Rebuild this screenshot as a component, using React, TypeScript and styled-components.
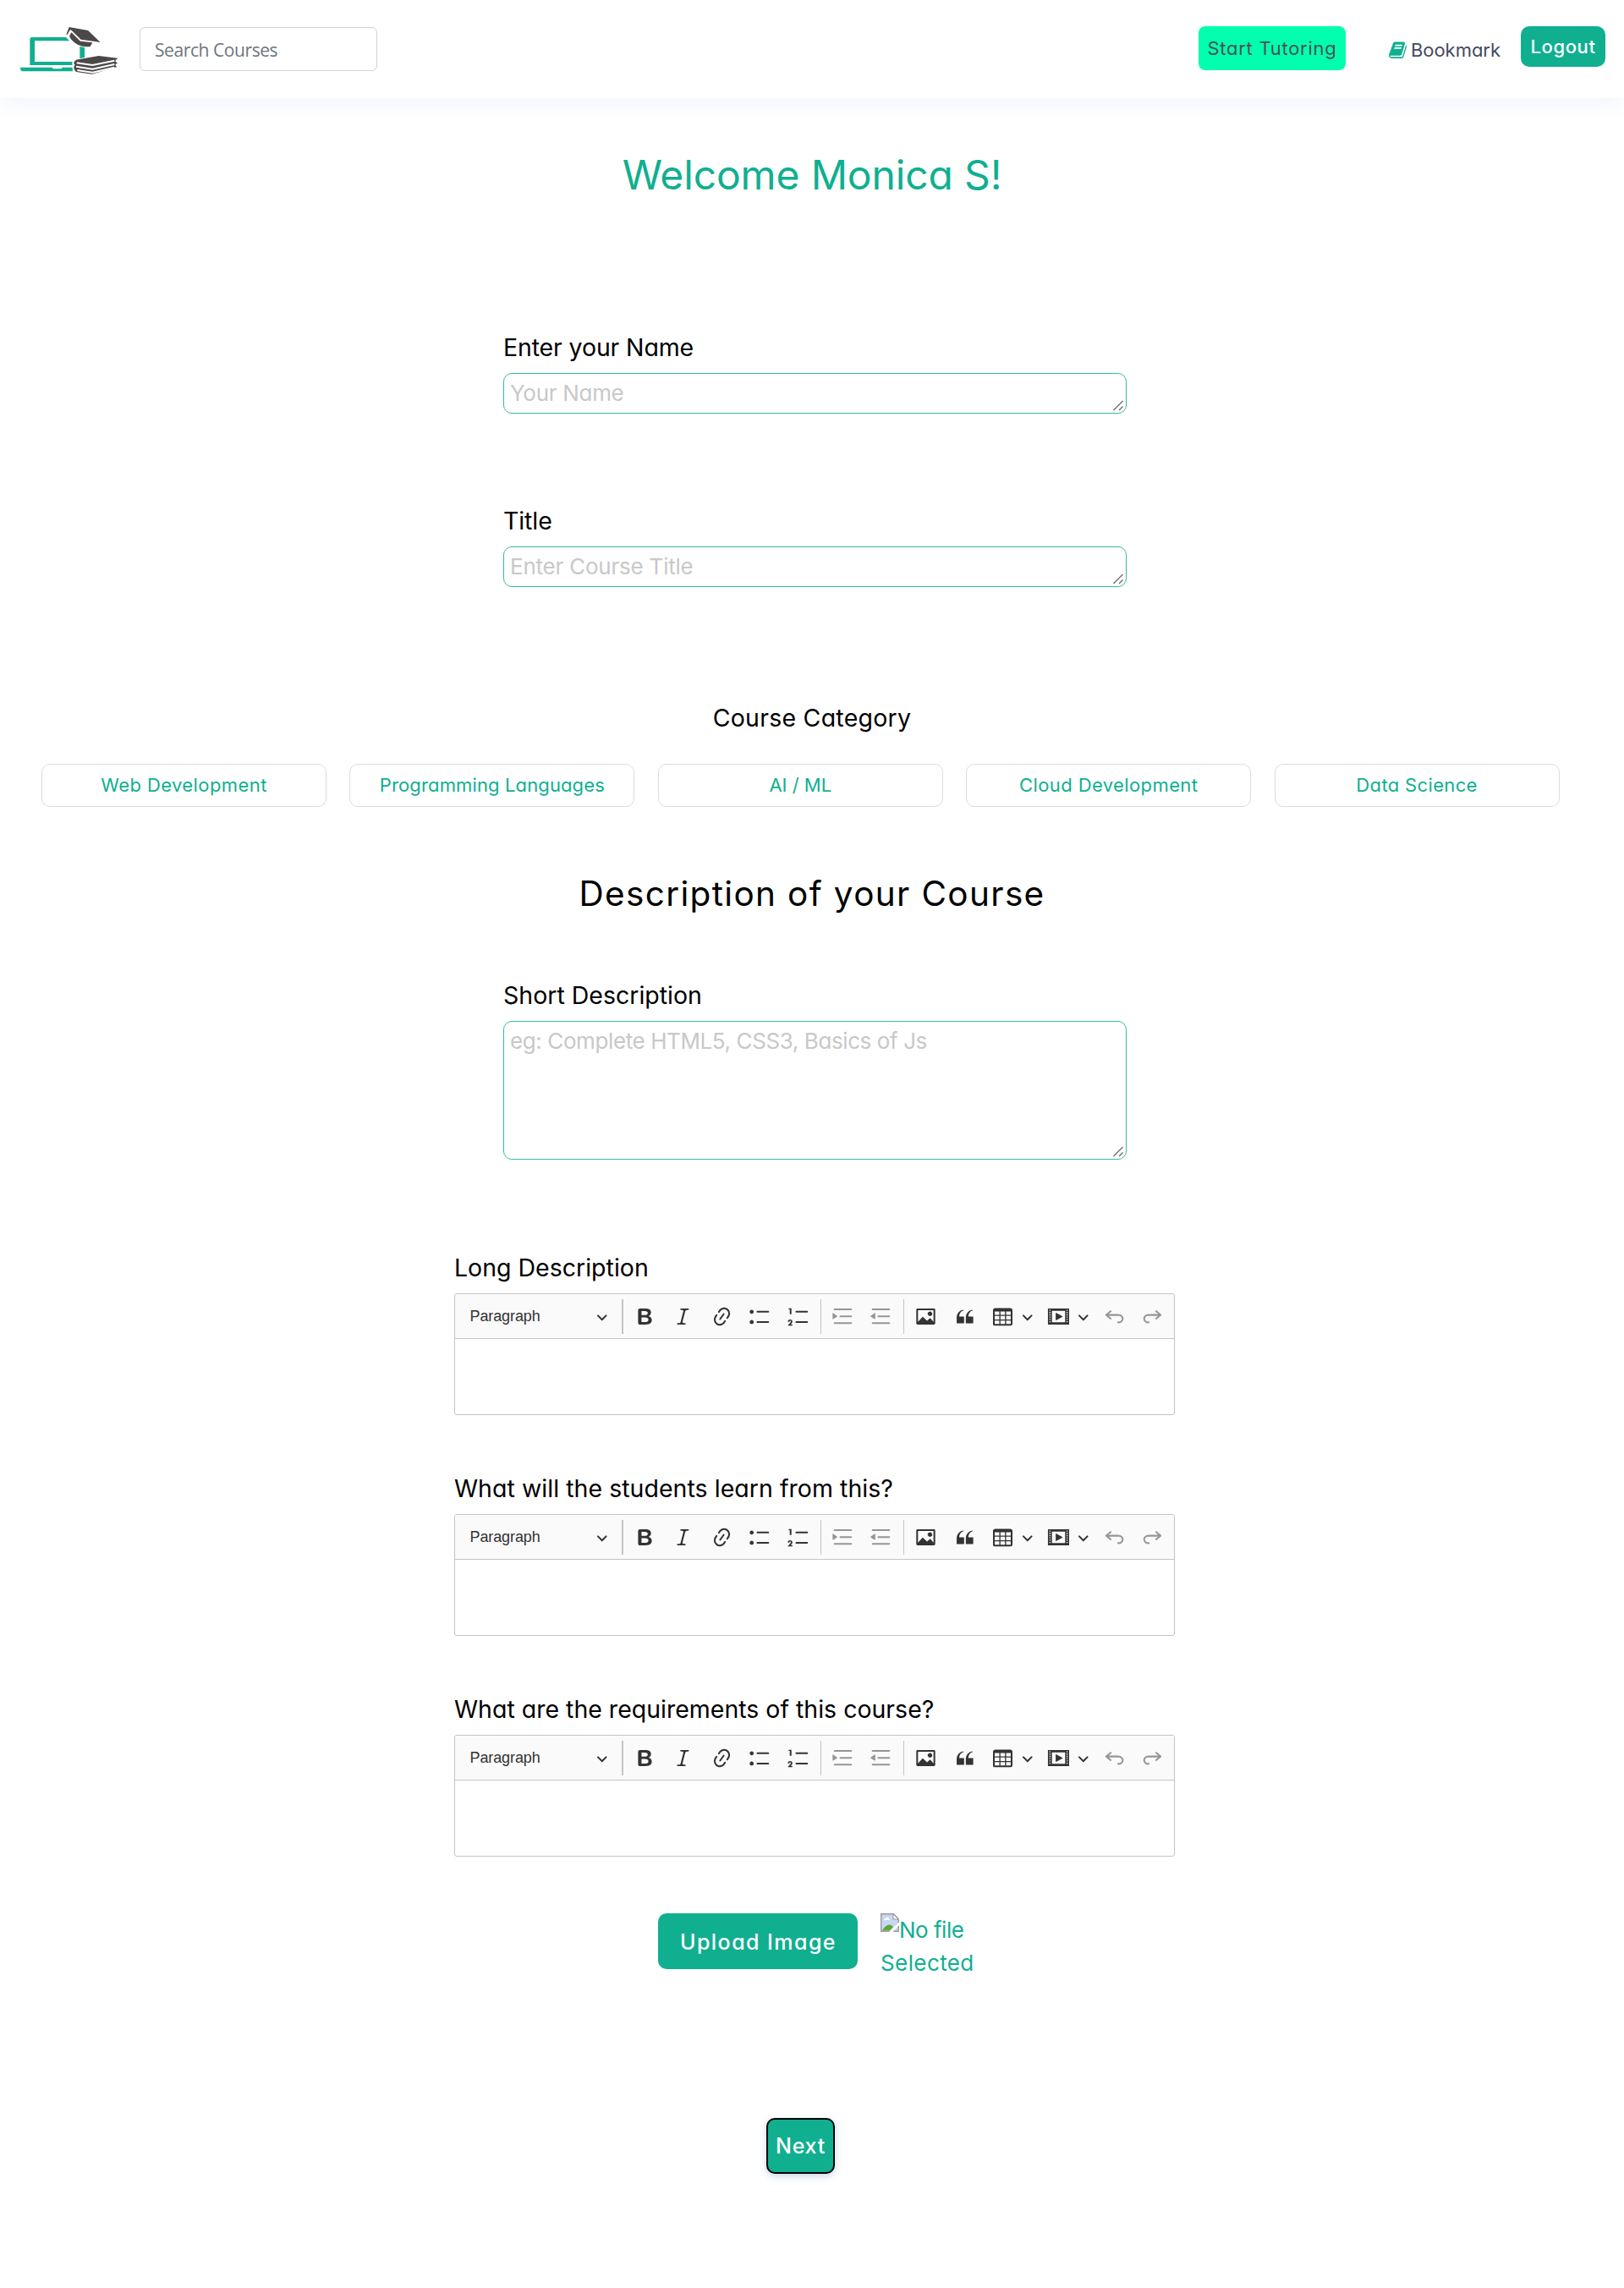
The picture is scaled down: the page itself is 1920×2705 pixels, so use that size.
import React from "react";
import styled, { createGlobalStyle } from "styled-components";

const GREEN = "#10af90";

const GlobalStyle = createGlobalStyle`
  *, *::before, *::after { box-sizing: border-box; }
  body {
    margin: 0;
    background: #fff;
    color: #000;
    font-family: Inter, "Liberation Sans", sans-serif;
    font-feature-settings: "cv11";
  }
  button, input, textarea { font: inherit; font-feature-settings: inherit; margin: 0; }
`;

const Page = styled.div`
  display: flex;
  flex-direction: column;
  min-height: 2705px;
`;

/* ---------- header ---------- */

const Header = styled.header`
  display: flex;
  align-items: flex-start;
  height: 116px;
  padding: 0 22px 0 16px;
  background: #fff;
  box-shadow: 0 13px 20px -4px rgba(65, 132, 234, 0.07);
`;

const LogoSvg = styled.svg`
  display: block;
  width: 130px;
  height: 70px;
  margin-top: 24px;
`;

const SearchInput = styled.input`
  width: 281px;
  height: 52px;
  margin: 32px auto 0 19px;
  padding: 1px 17px 0;
  border: 1px solid #ced4da;
  border-radius: 6px;
  background: #fff;
  color: #6c757d;
  font-family: "Open Sans", "Noto Sans", sans-serif;
  font-size: 21px;
  letter-spacing: -0.42px;
  &::placeholder { color: #6c757d; opacity: 1; }
`;

const TutoringButton = styled.button`
  width: 174px;
  height: 52px;
  margin: 31px 51px 0 0;
  padding: 0;
  border: 0;
  border-radius: 8px;
  background: #00ffae;
  color: #4f5150;
  font-size: 22px;
  letter-spacing: 0.72px;
`;

const BookmarkLink = styled.a`
  display: flex;
  align-items: center;
  gap: 5px;
  height: 40px;
  margin: 39px 24px 0 0;
  color: #444a63;
  font-size: 22px;
  letter-spacing: -0.03px;
  svg { display: block; width: 21px; height: 22.6px; fill: ${GREEN}; }
`;

const LogoutButton = styled.button`
  width: 100px;
  height: 48px;
  margin-top: 31px;
  padding: 0;
  border: 0;
  border-radius: 10px;
  background: ${GREEN};
  color: #fff;
  font-size: 22px;
  font-weight: 500;
  letter-spacing: 0.6px;
`;

/* ---------- form ---------- */

const Welcome = styled.h1`
  margin: 61px 0 0;
  line-height: 60px;
  font-size: 48px;
  font-weight: 400;
  letter-spacing: -0.15px;
  text-align: center;
  color: ${GREEN};
`;

const Field = styled.label<{ $top: number }>`
  display: flex;
  flex-direction: column;
  width: 737px;
  margin: ${(p) => p.$top}px 0 0 595px;
`;

const FieldLabel = styled.span<{ $spacing?: number }>`
  display: block;
  line-height: 40px;
  font-size: 28.5px;
  letter-spacing: ${(p) => p.$spacing ?? 0}px;
  white-space: nowrap;
`;

const TextAreaWrap = styled.span`
  position: relative;
  display: block;
  margin-top: 10px;
`;

const TextArea = styled.textarea<{ $height: number; $spacing: number }>`
  display: block;
  width: 737px;
  height: ${(p) => p.$height}px;
  padding: 3px 7px;
  border: 1px solid #35bc9f;
  border-radius: 10px;
  outline: 0;
  overflow: hidden;
  resize: none;
  background: #fff;
  line-height: 39px;
  font-size: 26px;
  letter-spacing: ${(p) => p.$spacing}px;
  &::placeholder { color: #c8c8c8; opacity: 1; }
`;

const Grip = styled.svg`
  position: absolute;
  right: 3px;
  bottom: 3px;
  width: 14px;
  height: 13px;
  fill: none;
  stroke: #757575;
  stroke-width: 1.5;
`;

const CategoryTitle = styled.h2`
  margin: 135px 0 0;
  line-height: 40px;
  font-size: 28.5px;
  font-weight: 400;
  letter-spacing: 0.25px;
  text-align: center;
`;

const Categories = styled.div`
  display: grid;
  grid-template-columns: repeat(5, 337px);
  column-gap: 27.4px;
  margin: 34px 0 0 49px;
`;

const Category = styled.button<{ $spacing: number }>`
  height: 51px;
  padding: 0 0 1px;
  border: 1px solid #dcdcdc;
  border-radius: 10px;
  background: #fff;
  color: ${GREEN};
  font-size: 22px;
  letter-spacing: ${(p) => p.$spacing}px;
`;

const SectionTitle = styled.h2`
  margin: 78px 0 0;
  line-height: 50px;
  font-size: 40.5px;
  font-weight: 400;
  letter-spacing: 1.35px;
  text-align: center;
`;

/* ---------- rich text editor ---------- */

const EditorBlock = styled.section<{ $top: number }>`
  width: 852px;
  margin: ${(p) => p.$top}px 0 0 537px;
`;

const EditorFrame = styled.div`
  height: 144px;
  margin-top: 10px;
  border: 1px solid #c4c4c4;
  border-radius: 3px;
  overflow: hidden;
`;

const Toolbar = styled.div`
  display: flex;
  align-items: center;
  height: 53px;
  border-bottom: 1px solid #c4c4c4;
  background: #fafafa;
  color: #333;
`;

const HeadingSelect = styled.div`
  display: flex;
  align-items: center;
  justify-content: space-between;
  width: 197px;
  padding: 0 16.5px 0 17.5px;
  font-family: "Liberation Sans", Arial, sans-serif;
  font-size: 18px;
  letter-spacing: -0.1px;
`;

const Divider = styled.span<{ $width: number; $margin: string }>`
  flex: none;
  width: ${(p) => p.$width}px;
  height: 41px;
  margin: ${(p) => p.$margin};
  background: #c4c4c4;
`;

const Tool = styled.span<{ $muted?: boolean }>`
  display: flex;
  flex: none;
  justify-content: center;
  width: ${(p) => (p.$muted ? 45.2 : 45.5)}px;
  opacity: ${(p) => (p.$muted ? 0.5 : 1)};
`;

const DropdownTool = styled.span`
  display: flex;
  flex: none;
  align-items: center;
  gap: 8.4px;
  width: 65.9px;
  padding-left: 9.4px;
`;

const ToolIcon = styled.svg`
  display: block;
  flex: none;
  width: 27px;
  height: 27px;
  fill: currentColor;
`;

const ArrowIcon = styled.svg`
  display: block;
  flex: none;
  width: 13.5px;
  height: 13.5px;
  margin-top: 1px;
  fill: currentColor;
`;

/* ---------- bottom actions ---------- */

const UploadRow = styled.div`
  display: flex;
  gap: 27px;
  margin: 67px 0 0 778px;
`;

const UploadButton = styled.button`
  width: 236px;
  height: 66px;
  padding: 1px 0 0 1px;
  border: 0;
  border-radius: 10px;
  background: ${GREEN};
  color: #fff;
  font-size: 25px;
  font-weight: 500;
  letter-spacing: 1.45px;
`;

const Preview = styled.div`
  width: 135px;
  line-height: 39px;
  font-size: 26px;
  color: ${GREEN};
`;

const PreviewLine = styled.div<{ $spacing: number }>`
  display: flex;
  align-items: flex-start;
  letter-spacing: ${(p) => p.$spacing}px;
  white-space: nowrap;
  svg { flex: none; width: 22px; height: 22px; }
`;

const NextButton = styled.button`
  width: 81px;
  height: 66px;
  margin: 164px 0 0 906px;
  padding: 0;
  border: 2px solid #000;
  border-radius: 10px;
  background: ${GREEN};
  box-shadow: 0 3px 8px rgba(60, 90, 160, 0.25);
  color: #fff;
  font-size: 25px;
  font-weight: 500;
  letter-spacing: 0.8px;
`;

const ICONS = {
  bold: "M10.187 17H5.773c-.637 0-1.092-.138-1.364-.415-.273-.277-.409-.718-.409-1.323V4.738c0-.617.14-1.062.419-1.332.279-.27.73-.406 1.354-.406h4.68c.69 0 1.288.041 1.793.124.506.083.96.242 1.36.477.341.197.644.447.906.75a3.262 3.262 0 0 1 .808 2.162c0 1.401-.722 2.426-2.167 3.075C15.05 10.175 16 11.315 16 13.01a3.756 3.756 0 0 1-2.296 3.504 6.1 6.1 0 0 1-1.517.377c-.571.073-1.238.11-2 .11zm-.217-6.217H7v4.087h3.069c1.977 0 2.965-.69 2.965-2.072 0-.707-.256-1.22-.768-1.537-.512-.319-1.277-.478-2.296-.478zM7 5.13v3.619h2.606c.729 0 1.292-.067 1.69-.2a1.6 1.6 0 0 0 .91-.765c.165-.267.247-.566.247-.897 0-.707-.26-1.176-.778-1.409-.519-.232-1.31-.348-2.375-.348H7z",
  italic: "m9.586 14.633.021.004c-.036.335.095.655.393.962.082.083.173.15.274.201h1.474a.6.6 0 1 1 0 1.2H5.304a.6.6 0 0 1 0-1.2h1.15c.474-.07.809-.182 1.005-.334.157-.122.291-.32.404-.597l2.416-9.55a1.053 1.053 0 0 0-.281-.823 1.12 1.12 0 0 0-.442-.296H8.15a.6.6 0 0 1 0-1.2h6.443a.6.6 0 1 1 0 1.2h-1.195c-.376.056-.65.155-.823.296-.215.175-.423.439-.623.79l-2.366 9.347z",
  link: "m11.077 15 .991-1.416a.75.75 0 1 1 1.229.86l-1.148 1.64a.748.748 0 0 1-.217.206 5.251 5.251 0 0 1-8.503-5.955.741.741 0 0 1 .12-.274l1.147-1.639a.75.75 0 1 1 1.228.86L4.933 10.7l.006.003a3.75 3.75 0 0 0 6.132 4.294l.006.004zm5.494-5.335a.748.748 0 0 1-.12.274l-1.147 1.639a.75.75 0 1 1-1.228-.86l.86-1.23a3.75 3.75 0 0 0-6.144-4.301l-.86 1.229a.75.75 0 0 1-1.229-.86l1.148-1.64a.748.748 0 0 1 .217-.206 5.251 5.251 0 0 1 8.503 5.955zm-4.563-2.532a.75.75 0 0 1 .184 1.045l-3.155 4.505a.75.75 0 1 1-1.229-.86l3.155-4.506a.75.75 0 0 1 1.045-.184z",
  bulleted: "M7 5.75c0 .414.336.75.75.75h9.5a.75.75 0 1 0 0-1.5h-9.5a.75.75 0 0 0-.75.75zm-6 0C1 4.784 1.777 4 2.75 4c.966 0 1.75.777 1.75 1.75 0 .966-.777 1.75-1.75 1.75C1.784 7.5 1 6.723 1 5.75zm6 9c0 .414.336.75.75.75h9.5a.75.75 0 1 0 0-1.5h-9.5a.75.75 0 0 0-.75.75zm-6 0c0-.966.777-1.75 1.75-1.75.966 0 1.75.777 1.75 1.75 0 .966-.777 1.75-1.75 1.75-.966 0-1.75-.777-1.75-1.75z",
  numbered: "M7 5.75c0 .414.336.75.75.75h9.5a.75.75 0 1 0 0-1.5h-9.5a.75.75 0 0 0-.75.75zM3.5 3v5H2V3.7H1v-1h2.5V3zM.343 17.857l2.59-3.257H2.92a.6.6 0 1 0-1.04 0H.302a2 2 0 1 1 3.995 0h-.001c-.048.405-.16.734-.333.988-.175.254-.59.692-1.244 1.312H4.3v1h-4l.043-.043zM7 14.75a.75.75 0 0 1 .75-.75h9.5a.75.75 0 1 1 0 1.5h-9.5a.75.75 0 0 1-.75-.75z",
  indent: "M2 3.75c0 .414.336.75.75.75h14.5a.75.75 0 1 0 0-1.5H2.75a.75.75 0 0 0-.75.75zm5 6c0 .414.336.75.75.75h9.5a.75.75 0 1 0 0-1.5h-9.5a.75.75 0 0 0-.75.75zM2.75 16.5h14.5a.75.75 0 1 0 0-1.5H2.75a.75.75 0 1 0 0 1.5zM1.632 6.95 5.02 9.358a.4.4 0 0 1-.013.661l-3.39 2.207A.4.4 0 0 1 1 11.892V7.275a.4.4 0 0 1 .632-.326z",
  outdent: "M2 3.75c0 .414.336.75.75.75h14.5a.75.75 0 1 0 0-1.5H2.75a.75.75 0 0 0-.75.75zm5 6c0 .414.336.75.75.75h9.5a.75.75 0 1 0 0-1.5h-9.5a.75.75 0 0 0-.75.75zM2.75 16.5h14.5a.75.75 0 1 0 0-1.5H2.75a.75.75 0 1 0 0 1.5zm1.618-9.55L.98 9.358a.4.4 0 0 0 .013.661l3.39 2.207A.4.4 0 0 0 5 11.892V7.275a.4.4 0 0 0-.632-.326z",
  image: "M6.91 10.54c.26-.23.64-.21.88.03l3.36 3.14 2.23-2.06a.64.64 0 0 1 .87 0l2.52 2.97V4.5H3.2v10.12l3.71-4.08zm10.27-7.51c.6 0 1.09.47 1.09 1.05v11.84c0 .59-.49 1.06-1.09 1.06H2.79c-.6 0-1.09-.47-1.09-1.06V4.08c0-.58.49-1.05 1.1-1.05h14.38zm-5.22 5.56a1.96 1.96 0 1 1 3.4-1.96 1.96 1.96 0 0 1-3.4 1.96z",
  quote: "M3 10.423a6.5 6.5 0 0 1 6.056-6.408l.038.67C6.448 5.423 5.354 7.663 5.22 10H9c.552 0 .5.432.5.986v4.511c0 .554-.448.503-1 .503h-5c-.552 0-.5-.449-.5-1.003v-4.574zm8 0a6.5 6.5 0 0 1 6.056-6.408l.038.67c-2.646.739-3.74 2.979-3.873 5.315H17c.552 0 .5.432.5.986v4.511c0 .554-.448.503-1 .503h-5c-.552 0-.5-.449-.5-1.003v-4.574z",
  table: "M3 5.5v3h4v-3H3zm0 4v3h4v-3H3zm0 4v3h4v-3H3zm5 3h4v-3H8v3zm5 0h4v-3h-4v3zm4-4v-3h-4v3h4zm0-4v-3h-4v3h4zm1.5 8a1.5 1.5 0 0 1-1.5 1.5H3A1.5 1.5 0 0 1 1.5 17V4c.222-.863 1.068-1.5 2-1.5h13c.932 0 1.778.637 2 1.5v12.5zM12 12.5v-3H8v3h4zm0-4v-3H8v3h4z",
  media: "M18.68 3.03c.6 0 .59-.03.59.55v12.84c0 .59.01.56-.59.56H1.29c-.6 0-.59.03-.59-.56V3.58c0-.58-.01-.55.6-.55h17.38zM15.77 15V5H4.2v10h11.57zM2 4v1h1V4H2zm0 2v1h1V6H2zm0 2v1h1V8H2zm0 2v1h1v-1H2zm0 2v1h1v-1H2zm0 2v1h1v-1H2zM17 4v1h1V4h-1zm0 2v1h1V6h-1zm0 2v1h1V8h-1zm0 2v1h1v-1h-1zm0 2v1h1v-1h-1zm0 2v1h1v-1h-1zM7.5 7.177a.4.4 0 0 1 .593-.351l5.133 2.824a.4.4 0 0 1 0 .7l-5.133 2.824a.4.4 0 0 1-.593-.35V7.176v.001z",
  undo: "m5.042 9.367 2.189 1.837a.75.75 0 0 1-.965 1.149l-3.788-3.18a.747.747 0 0 1-.21-.284.75.75 0 0 1 .17-.945L6.23 4.762a.75.75 0 1 1 .964 1.15L4.863 7.866h8.917A.75.75 0 0 1 14 7.9a4 4 0 1 1-1.477 7.718l.344-1.489a2.5 2.5 0 1 0 1.094-4.73l.008-.032H5.042z",
  redo: "m14.958 9.367-2.189 1.837a.75.75 0 0 0 .965 1.149l3.788-3.18a.747.747 0 0 0 .21-.284.75.75 0 0 0-.17-.945L13.77 4.762a.75.75 0 1 0-.964 1.15l2.331 1.955H6.22A.75.75 0 0 0 6 7.9a4 4 0 1 0 1.477 7.718l-.344-1.489A2.5 2.5 0 1 1 6.039 9.4l-.008-.032h8.927z",
};

type IconName = keyof typeof ICONS;

const Icon = ({ name }: { name: IconName }) => (
  <ToolIcon viewBox="0 0 20 20" aria-hidden="true">
    <path d={ICONS[name]} />
  </ToolIcon>
);

const Arrow = () => (
  <ArrowIcon viewBox="0 0 10 10" aria-hidden="true">
    <path d="M.941 4.523a.75.75 0 1 1 1.06-1.06l3.006 3.005 3.005-3.005a.75.75 0 1 1 1.06 1.06l-3.549 3.55a.75.75 0 0 1-1.168-.136L.941 4.523z" />
  </ArrowIcon>
);

const FORMAT_TOOLS: IconName[] = ["bold", "italic", "link", "bulleted", "numbered"];

const Editor = ({ label, top, spacing }: { label: string; top: number; spacing?: number }) => (
  <EditorBlock $top={top}>
    <FieldLabel $spacing={spacing}>{label}</FieldLabel>
    <EditorFrame>
      <Toolbar>
        <HeadingSelect>
          Paragraph
          <Arrow />
        </HeadingSelect>
        <Divider $width={2} $margin="0 2.5px 0 0" />
        {FORMAT_TOOLS.map((name) => (
          <Tool key={name}>
            <Icon name={name} />
          </Tool>
        ))}
        <Divider $width={1} $margin="0 3px" />
        <Tool $muted><Icon name="indent" /></Tool>
        <Tool $muted><Icon name="outdent" /></Tool>
        <Divider $width={1} $margin="0 3px 0 3.5px" />
        <Tool><Icon name="image" /></Tool>
        <Tool><Icon name="quote" /></Tool>
        <DropdownTool>
          <Icon name="table" />
          <Arrow />
        </DropdownTool>
        <DropdownTool>
          <Icon name="media" />
          <Arrow />
        </DropdownTool>
        <Tool $muted><Icon name="undo" /></Tool>
        <Tool $muted><Icon name="redo" /></Tool>
      </Toolbar>
    </EditorFrame>
  </EditorBlock>
);

interface TextFieldProps {
  label: string;
  placeholder: string;
  top: number;
  height: number;
  spacing: number;
  labelSpacing?: number;
}

const TextField = ({ label, placeholder, top, height, spacing, labelSpacing }: TextFieldProps) => (
  <Field $top={top}>
    <FieldLabel $spacing={labelSpacing}>{label}</FieldLabel>
    <TextAreaWrap>
      <TextArea $height={height} $spacing={spacing} placeholder={placeholder} />
      <Grip viewBox="0 0 14 13" aria-hidden="true">
        <path d="M1.500 12 12.500 1M8 12 12.500 7.500" />
      </Grip>
    </TextAreaWrap>
  </Field>
);

const Logo = () => (
  <LogoSvg viewBox="0 0 390 210" aria-label="Logo">
    <path fill={GREEN} d="M66 60H244Q252 60 252 68V159H58V68Q58 60 66 60ZM75 73V147H235V73Z" fillRule="evenodd" />
    <path fill={GREEN} d="M24 167H138V169Q138 172 142 172H168Q172 172 172 169V167H226V181H34Q24 181 24 167Z" />
    <path fill="#fff" d="M196 42L186 60L204 78Q226 98 272 96L286 78L300 79L262 30L200 20Z" />
    <path fill="#4c4848" d="M197 24L264 36L308 78L239 68L207 37L201 33L190 52L187 50Z" />
    <path fill="#4c4848" d="M205 43L237 74L280 79L272 93Q228 98 203 66L198 56Z" />
    <path fill="#fff" d="M208 150L218 138L302 124L372 132L370 170L282 194L210 184Z" />
    <path fill="#4c4848" d="M222 140L302 126L368 134V138L362 140V148L368 150V153L362 155V162L368 165L278 191L222 183Q208 168 218 158Q208 150 222 140Z" />
    <path fill="none" stroke="#fff" strokeWidth="6" d="M224 151L280 159L358 143M222 164L280 173L358 156M226 177L280 185L358 167" />
  </LogoSvg>
);

const BookIcon = () => (
  <svg viewBox="0 0 1664 1792" aria-hidden="true">
    <path d="M1639 478q40 57 18 129l-275 906q-19 64-76.500 107.500t-122.500 43.500h-923q-77 0-148.500-53.500t-99.500-131.500q-24-67-2-127 0-4 3-27t4-37q1-8-3-21.500t-3-19.500q2-11 8-21t16.500-23.500 16.500-23.500q23-38 45-91.500t30-91.500q3-10 .5-30t-.5-28q3-11 17-28t17-23q21-36 42-92t25-90q1-9-2.500-32t.5-28q4-13 22-30.500t22-22.500q19-26 42.500-84.500t27.500-96.500q1-8-3-25.500t-2-26.500q2-8 9-18t18-23 17-21q8-12 16.500-30.500t15-35 16-36 19.500-32 26.500-23.500 36-11.500 47.500 5.500l-1 3q38-9 51-9h761q74 0 114 56t18 130l-274 906q-36 119-71.500 153.500t-128.500 34.500h-869q-27 0-38 15-11 16-1 43 24 70 144 70h923q29 0 56-15.500t35-41.500l300-987q7-22 5-57 38 15 59 43zm-1064 2q-4 13 2 22.500t20 9.500h608q13 0 25.500-9.500t16.500-22.500l21-64q4-13-2-22.500t-20-9.500h-608q-13 0-25.500 9.500t-16.500 22.500zm-83 256q-4 13 2 22.500t20 9.500h608q13 0 25.500-9.500t16.500-22.500l21-64q4-13-2-22.500t-20-9.500h-608q-13 0-25.500 9.500t-16.500 22.500z" />
  </svg>
);

const BrokenImageIcon = () => (
  <svg viewBox="0 0 22 22" aria-hidden="true">
    <path fill="#c7d7f3" d="M1 1H15L21 7V21H1Z" />
    <path fill="#fff" d="M4 8Q4 6 6 6Q7 4 8.500 4.500Q10 5 10 6.500Q11.500 7 11 8Z" />
    <path fill="#56ac35" d="M2 20.500Q6 13.500 10.500 13.500Q13.500 13.500 15 16L11 20.500Z" />
    <path fill="none" stroke="#9b9b9b" strokeWidth="1.400" d="M.7.7H15.300L21.300 6.700V21.300H.7Z" />
    <path fill="#fff" stroke="#9b9b9b" d="M15 1V7H21Z" />
    <path fill="#fff" d="M22 10.500V14L14.500 22H10Z" />
  </svg>
);

const CATEGORIES = [
  { name: "Web Development", spacing: 0.42 },
  { name: "Programming Languages", spacing: 0.13 },
  { name: "AI / ML", spacing: 0 },
  { name: "Cloud Development", spacing: 0.4 },
  { name: "Data Science", spacing: 0.35 },
];

export default function App() {
  return (
    <Page>
      <GlobalStyle />
      <Header>
        <Logo />
        <SearchInput placeholder="Search Courses" />
        <TutoringButton>Start Tutoring</TutoringButton>
        <BookmarkLink>
          <BookIcon />
          Bookmark
        </BookmarkLink>
        <LogoutButton>Logout</LogoutButton>
      </Header>

      <Welcome>Welcome Monica S!</Welcome>

      <TextField label="Enter your Name" labelSpacing={-0.13} placeholder="Your Name" top={154} height={48} spacing={-0.3} />
      <TextField label="Title" labelSpacing={-0.1} placeholder="Enter Course Title" top={107} height={48} spacing={-0.22} />

      <CategoryTitle>Course Category</CategoryTitle>
      <Categories>
        {CATEGORIES.map((c) => (
          <Category key={c.name} $spacing={c.spacing}>
            {c.name}
          </Category>
        ))}
      </Categories>

      <SectionTitle>Description of your Course</SectionTitle>

      <TextField
        label="Short Description"
        placeholder="eg: Complete HTML5, CSS3, Basics of Js"
        top={75}
        height={164}
        spacing={-0.4}
      />

      <Editor label="Long Description" top={108} />
      <Editor label="What will the students learn from this?" top={67} spacing={0.04} />
      <Editor label="What are the requirements of this course?" top={67} />

      <UploadRow>
        <UploadButton>Upload Image</UploadButton>
        <Preview>
          <PreviewLine $spacing={-0.5}>
            <BrokenImageIcon />
            No file
          </PreviewLine>
          <PreviewLine $spacing={0.4}>Selected</PreviewLine>
        </Preview>
      </UploadRow>

      <NextButton>Next</NextButton>
    </Page>
  );
}
